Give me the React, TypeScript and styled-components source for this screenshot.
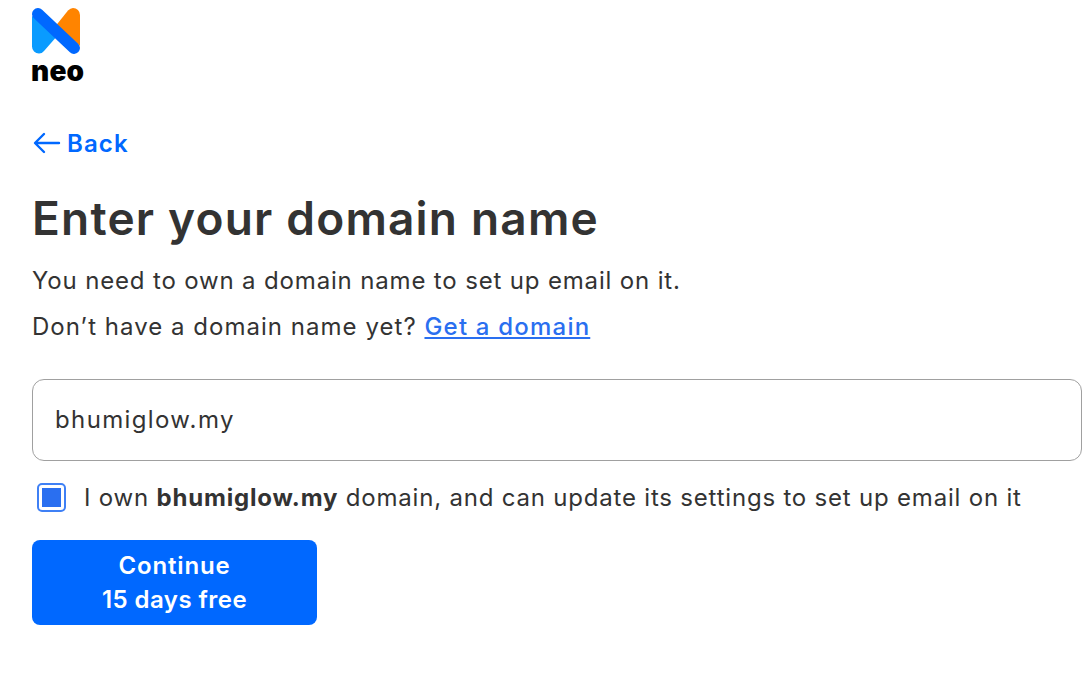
import React from 'react';
import styled, { createGlobalStyle } from 'styled-components';

const Global = createGlobalStyle`
  html, body { margin: 0; padding: 0; background: #fff; overflow: hidden; }
  body { font-family: "Inter", "Liberation Sans", sans-serif; color: #333; }
  * { box-sizing: border-box; }
`;
const Page = styled.div`
  width: 1092px;
  height: 679px;
  padding: 8px 10px 0 32px;
`;
const Logo = styled.div`
  display: flex;
  flex-direction: column;
  align-items: flex-start;
  height: 74px;
`;
const LogoMark = styled.svg`
  flex-shrink: 0;
`;
const LogoWord = styled.span`
  font-size: 28px;
  font-weight: 900;
  color: #000;
  line-height: 22px;
  margin-top: 6px;
  margin-left: -1px;
  letter-spacing: 0.2px;
`;
const Back = styled.a`
  display: flex;
  align-items: center;
  gap: 5px;
  margin-top: 47px;
  height: 28px;
  color: #0068ff;
  font-size: 24px;
  font-weight: 600;
  letter-spacing: 1.1px;
`;
const Title = styled.h1`
  margin: 33px 0 0;
  font-size: 46px;
  line-height: 56px;
  font-weight: 600;
  letter-spacing: 1.2px;
  color: #333;
`;
const Line = styled.p<{ $spacing: number }>`
  margin: 0;
  font-size: 24px;
  line-height: 46px;
  letter-spacing: ${({ $spacing }) => $spacing}px;
  color: #333;
`;
const Intro = styled(Line)`
  margin-top: 12px;
`;
const Link = styled.a`
  color: #2a6ff0;
  text-decoration: underline;
  font-weight: 500;
  letter-spacing: 1.2px;
`;
const Input = styled.div`
  margin-top: 29px;
  width: 1050px;
  height: 82px;
  border: 1px solid #a0a0a0;
  border-radius: 12px;
  padding: 0 22px 2px;
  display: flex;
  align-items: center;
  font-size: 24px;
  letter-spacing: 1.37px;
`;
const CheckRow = styled.label`
  display: flex;
  align-items: center;
  gap: 18px;
  margin-top: 20px;
  padding-left: 5px;
  font-size: 24px;
  letter-spacing: 0.8px;
  height: 32px;
`;
const Box = styled.span`
  width: 29px;
  height: 29px;
  border: 2px solid #3f80f5;
  border-radius: 5px;
  display: flex;
  align-items: center;
  justify-content: center;
  &::after { content: ""; width: 19px; height: 19px; background: #2a6ff0; }
`;
const Submit = styled.button`
  display: block;
  margin-top: 27px;
  width: 285px;
  height: 85px;
  border: 0;
  border-radius: 8px;
  background: #0068ff;
  color: #fff;
  font: 600 24px/34px "Inter", "Liberation Sans", sans-serif;
`;
const SubmitLine = styled.span<{ $spacing: number }>`
  display: block;
  letter-spacing: ${({ $spacing }) => $spacing}px;
`;

export default function App() {
  return (
    <Page>
      <Global />
      <Logo>
        <LogoMark width="48" height="46" viewBox="0 0 48 46">
          <path d="M0 8V38.5A7 7 0 0 0 7 45.5Q10 45.5 12 43L26 27Z" fill="#0a9bff" />
          <path d="M24 17.5L36 2.5Q38.5 0 41 0A7 7 0 0 1 48 7V38Z" fill="#ff8400" />
          <path d="M6 6L42 40" stroke="#0068ff" strokeWidth="12" strokeLinecap="round" fill="none" />
        </LogoMark>
        <LogoWord>neo</LogoWord>
      </Logo>
      <Back>
        <svg width="30" height="24" viewBox="0 0 30 24" fill="none" stroke="#0068ff" strokeWidth="2.4" strokeLinecap="round" strokeLinejoin="round">
          <path d="M27 12H4M12 3l-9 9 9 9" />
        </svg>
        Back
      </Back>
      <Title>Enter your domain name</Title>
      <Intro $spacing={0.84}>You need to own a domain name to set up email on it.</Intro>
      <Line $spacing={1.03}>Don’t have a domain name yet? <Link>Get a domain</Link></Line>
      <Input>bhumiglow.my</Input>
      <CheckRow>
        <Box />
        <span>I own <b>bhumiglow.my</b> domain, and can update its settings to set up email on it</span>
      </CheckRow>
      <Submit>
        <SubmitLine $spacing={0.85}>Continue</SubmitLine>
        <SubmitLine $spacing={0.45}>15 days free</SubmitLine>
      </Submit>
    </Page>
  );
}
